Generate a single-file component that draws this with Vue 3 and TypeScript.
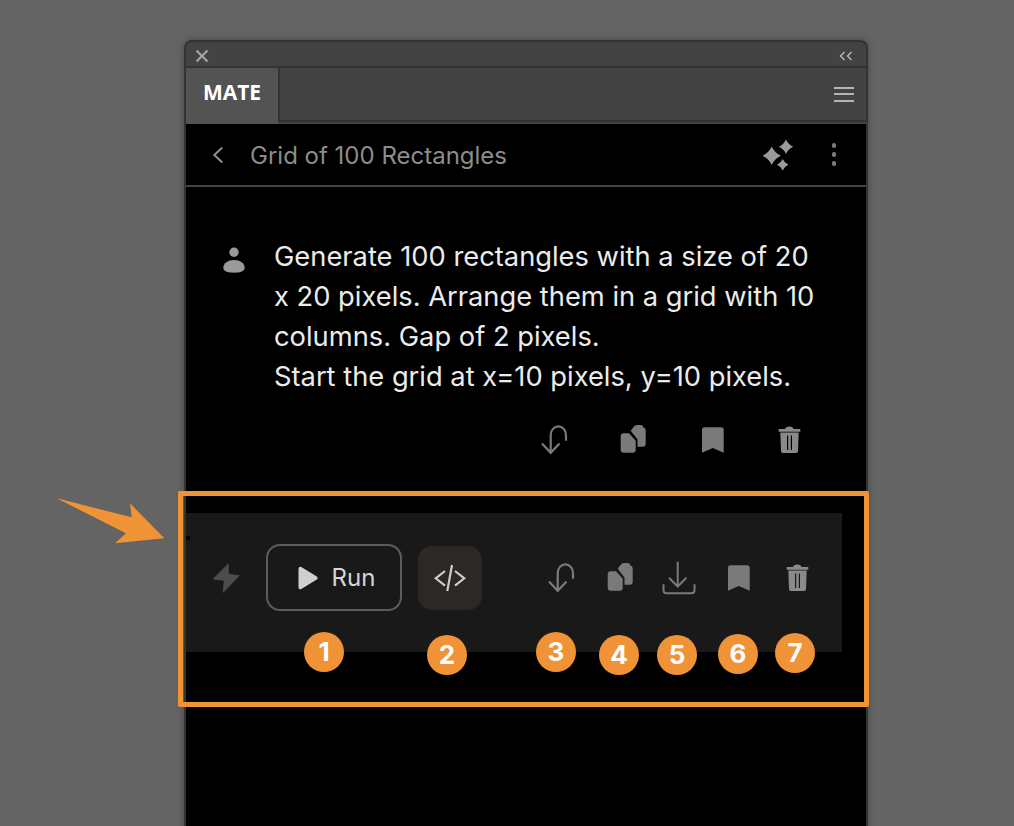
<script setup lang="ts">
const promptLines = [
  "Generate 100 rectangles with a size of 20 x 20 pixels. Arrange them in a grid with 10 columns. Gap of 2 pixels.",
  "Start the grid at x=10 pixels, y=10 pixels.",
];

// callout badges, placed over the screenshot
const badges = [
  { n: 1, x: 324, y: 652 },
  { n: 2, x: 447, y: 655 },
  { n: 3, x: 556, y: 652 },
  { n: 4, x: 619, y: 655 },
  { n: 5, x: 677, y: 655 },
  { n: 6, x: 738, y: 654 },
  { n: 7, x: 795, y: 653 },
];
</script>

<template>
  <svg class="defs" width="0" height="0">
    <symbol id="i-undo" viewBox="0 0 34 34">
      <path d="M5 20.500 13.700 29.800 22.500 20.500M13.700 29.500V12a7.600 8.600 0 0 1 15.300 0v5.700" fill="none" stroke="currentColor" stroke-width="2.200" />
    </symbol>
    <symbol id="i-copy" viewBox="0 0 34 34">
      <path d="M14.700 7.700 18 3.500Q19 2 21 2h4q2 0 2.500 2.500 2.200.5 2.200 3V20.700q0 3-3 3H21.500V16.500z" fill="currentColor" />
      <path d="M7.700 10.300H13L19.700 17.700V26.700q0 3-3 3h-9q-3 0-3-3V13.300q0-3 3-3z" fill="currentColor" />
    </symbol>
    <symbol id="i-mark" viewBox="0 0 34 34">
      <path d="M9.500 4.300h16.700a2.500 2.500 0 0 1 2.500 2.500v23L17.800 25 7 29.800v-23a2.500 2.500 0 0 1 2.500-2.500z" fill="currentColor" />
    </symbol>
    <symbol id="i-trash" viewBox="0 0 34 34">
      <path fill-rule="evenodd" d="M6.700 6h6.300c.5-1.400 2-2.500 4.300-2.500s3.800 1.100 4.300 2.500h6.700v2.700H6.700zM8.300 9.500h18.400l-.7 18.500a2 2 0 0 1-2 2H11a2 2 0 0 1-2-2zM15 12.500V27h1.200V12.500zM18.800 12.500V27h1.200V12.500z" fill="#8a8a8a" />
    </symbol>
    <symbol id="i-save" viewBox="0 0 34 34">
      <path d="M15.700 .7V25M7 16.700l8.700 8.800 8.700-8.800M1.500 23.300v6a3 3 0 0 0 3 3h25a3 3 0 0 0 3-3v-6" fill="none" stroke="currentColor" stroke-width="2" />
    </symbol>
  </svg>

  <div class="page">
    <section class="panel">
      <div class="titlebar">
        <svg class="close" viewBox="0 0 14 14"><path d="M1.500 1.500l11 11M12.500 1.500l-11 11" stroke="#a4a4a4" stroke-width="2.200" fill="none" /></svg>
        <svg class="collapse" viewBox="0 0 14 10"><path d="M5.500 1 1.500 5l4 4M12.500 1l-4 4 4 4" stroke="#c0c0c0" stroke-width="1.300" fill="none" /></svg>
      </div>
      <div class="tabbar">
        <div class="tab">MATE</div>
        <div class="tab-rest">
          <div class="burger"><i></i><i></i><i></i></div>
        </div>
      </div>

      <div class="content">
        <header class="chat-head">
          <svg class="back" viewBox="0 0 12 18"><path d="M10.300 1.500 2.300 9l8 7.500" stroke="#8e8e8e" stroke-width="2" fill="none" /></svg>
          <h1>Grid of 100 Rectangles</h1>
          <svg class="sparkle" viewBox="0 0 32 32">
            <path d="M9.700 7.500Q12.500 13.900 18.900 16.700 12.500 19.500 9.700 25.900 6.900 19.500 .5 16.700 6.900 13.900 9.700 7.500z" fill="#9a9a9a" />
            <path d="M24 .5Q26.200 5.500 31.200 7.700 26.200 9.900 24 14.900 21.800 9.900 16.800 7.700 21.800 5.500 24 .5z" fill="#9a9a9a" />
            <path d="M20.700 20Q22.400 24 26.400 25.700 22.400 27.400 20.700 31.400 19 27.400 15 25.700 19 24 20.700 20z" fill="#9a9a9a" />
          </svg>
          <div class="kebab"><i></i><i></i><i></i></div>
        </header>

        <div class="message">
          <svg class="avatar" viewBox="0 0 24 28">
            <circle cx="12" cy="6.300" r="4.700" fill="#9a9a9a" />
            <path d="M1.300 22c0-5 4.700-8 10.700-8s10.700 3 10.700 8c0 3-4 4.700-10.700 4.700S1.300 25 1.300 22z" fill="#9a9a9a" />
          </svg>
          <div class="prompt">
            <p v-for="line in promptLines" :key="line">{{ line }}</p>
          </div>
        </div>

        <div class="msg-actions">
          <svg class="ico"><use href="#i-undo" /></svg>
          <svg class="ico"><use href="#i-copy" /></svg>
          <svg class="ico"><use href="#i-mark" /></svg>
          <svg class="ico trash"><use href="#i-trash" /></svg>
        </div>

        <div class="action-bar">
          <i class="speck"></i>
          <svg class="bolt" viewBox="0 0 28 30">
            <path d="M16.300 1 1.300 16 12.300 17.300 11.300 29.300 27 12.700 16.300 11.300z" fill="#4c4c4c" stroke="#4c4c4c" stroke-width="1" stroke-linejoin="round" />
          </svg>
          <button class="run">
            <svg viewBox="0 0 20 24"><path d="M.500 2.500a1.800 1.800 0 0 1 2.800-1.500l15.500 9.500a1.800 1.800 0 0 1 0 3L3.300 23a1.800 1.800 0 0 1-2.800-1.500z" fill="#cfcfcf" /></svg>
            Run
          </button>
          <button class="code">
            <svg viewBox="0 0 32 28"><path d="M11 7 1.700 14.300 11 21.700M21 7l9.300 7.300L21 21.700M18 1l-4.700 26" stroke="#cdcdcd" stroke-width="2.200" fill="none" /></svg>
          </button>
          <div class="bar-icons">
            <svg class="ico"><use href="#i-undo" /></svg>
            <svg class="ico"><use href="#i-copy" /></svg>
            <svg class="ico"><use href="#i-save" /></svg>
            <svg class="ico"><use href="#i-mark" /></svg>
            <svg class="ico"><use href="#i-trash" /></svg>
          </div>
        </div>
      </div>
    </section>

    <div class="frame"></div>
    <svg class="arrow" viewBox="0 0 110 48"><path d="M.7 1.300 75.700 20.300 74 6.300 108.300 41.300 59 46.300 70 36.300z" fill="#f09236" /></svg>
    <span v-for="b in badges" :key="b.n" class="badge" :style="{ left: b.x - 20 + 'px', top: b.y - 20 + 'px' }">{{ b.n }}</span>
  </div>
</template>

<style>
html,
body {
  margin: 0;
  background: #636463;
}
</style>

<style scoped>
.defs {
  position: absolute;
}

.page {
  position: relative;
  height: 826px;
  overflow: hidden;
  padding: 40px 0 0 184px;
  box-sizing: border-box;
  background: #636463;
  font-family: Inter, "Liberation Sans", sans-serif;
  font-feature-settings: "calt" 0;
}

.panel {
  width: 684px;
  height: 830px;
  box-sizing: border-box;
  border: 2px solid #333;
  border-bottom: 0;
  border-radius: 8px 8px 0 0;
  background: #434343;
  box-shadow: 0 0 6px rgba(40, 40, 40, 0.5);
  overflow: hidden;
}

.titlebar {
  height: 26px;
  box-sizing: border-box;
  display: flex;
  align-items: center;
  justify-content: space-between;
  padding: 4px 13px 0 9px;
  border-bottom: 2px solid #333;
}

.close {
  width: 14px;
  height: 14px;
}

.collapse {
  width: 14px;
  height: 10px;
}

.tabbar {
  height: 56px;
  display: flex;
}

.tab {
  width: 92px;
  background: #535353;
  color: #fff;
  font: 700 21px/48px "Open Sans", sans-serif;
  text-align: center;
}

.tab-rest {
  flex: 1;
  height: 54px;
  box-sizing: border-box;
  display: flex;
  justify-content: flex-end;
  border-bottom: 2px solid #333;
  border-left: 2px solid #333;
}

.burger {
  display: flex;
  flex-direction: column;
  justify-content: center;
  gap: 4.500px;
  padding-right: 12px;
}

.burger i {
  display: block;
  width: 20px;
  height: 2px;
  background: #b4b4b4;
}

.content {
  height: 760px;
  background: #000;
}

.chat-head {
  height: 63px;
  box-sizing: border-box;
  display: flex;
  align-items: center;
  border-bottom: 2px solid #444;
  padding: 0 30px 0 26px;
}

.back {
  width: 12px;
  height: 18px;
}

h1 {
  margin: 1px 0 0 26px;
  flex: 1;
  color: #8c8c8c;
  font-size: 24px;
  font-weight: 400;
}

.sparkle {
  width: 32px;
  height: 32px;
  margin-right: 38px;
}

.kebab {
  display: flex;
  flex-direction: column;
  gap: 4.500px;
}

.kebab i {
  width: 4.500px;
  height: 4.500px;
  border-radius: 50%;
  background: #7e7e7e;
}

.message {
  display: flex;
  padding: 50px 40px 0 36px;
}

.avatar {
  width: 24px;
  height: 28px;
  margin-top: 9px;
  flex: none;
}

.prompt {
  margin-left: 28px;
  width: 545px;
  color: #ebebeb;
  font-size: 27.300px;
  line-height: 40px;
}

.prompt p {
  margin: 0;
}

.msg-actions {
  display: flex;
  gap: 45px;
  padding: 26px 0 0 351px;
}

.ico {
  width: 34px;
  height: 34px;
  flex: none;
  color: #7a7a7a;
}

.msg-actions .trash {
  margin-left: -2px;
}

.action-bar {
  position: relative;
  margin-top: 56px;
  width: 656px;
  height: 139px;
  box-sizing: border-box;
  background: #191919;
  display: flex;
  align-items: center;
  padding: 0 28px 10px 26px;
}

.speck {
  position: absolute;
  left: 0;
  top: 23px;
  width: 4px;
  height: 4px;
  background: #000;
}

.bolt {
  width: 28px;
  height: 30px;
  flex: none;
}

.run {
  width: 136px;
  height: 67px;
  margin-left: 26px;
  box-sizing: border-box;
  border: 2px solid #5c5c5c;
  border-radius: 14px;
  padding: 0 0 0 5px;
  background: transparent;
  color: #d6d6d6;
  font: 400 24px Inter, sans-serif;
  display: flex;
  align-items: center;
  justify-content: center;
  gap: 14px;
}

.run svg {
  width: 20px;
  height: 24px;
}

.code {
  width: 64px;
  height: 64px;
  margin-left: 16px;
  border: 0;
  padding: 0;
  border-radius: 14px;
  background: #2b2825;
  display: flex;
  align-items: center;
  justify-content: center;
}

.code svg {
  width: 32px;
  height: 28px;
}

.bar-icons {
  margin-left: auto;
  display: flex;
  gap: 25px;
}

.frame {
  position: absolute;
  left: 178px;
  top: 491px;
  width: 691px;
  height: 216px;
  box-sizing: border-box;
  border: 5px solid #f09236;
  border-radius: 2px;
}

.arrow {
  position: absolute;
  left: 56px;
  top: 497px;
  width: 110px;
  height: 48px;
}

.badge {
  position: absolute;
  width: 40px;
  height: 40px;
  border-radius: 50%;
  background: #f09236;
  color: #fff;
  font: 700 26px/40px Inter, sans-serif;
  text-align: center;
}
</style>
